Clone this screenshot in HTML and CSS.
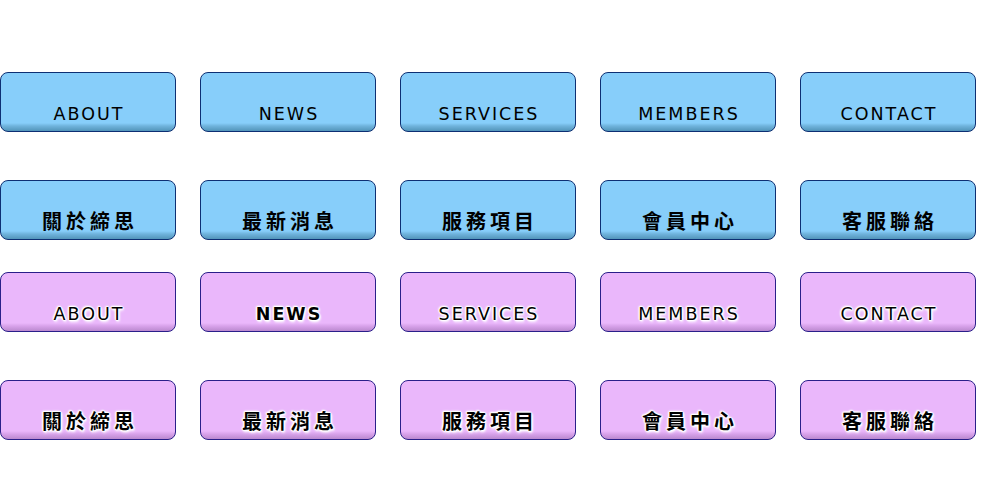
FILE: index.html
```html
<!DOCTYPE html>
<html lang="zh-Hant">
<head>
<meta charset="utf-8">
<title>Buttons</title>
<link rel="stylesheet" href="styles.css">
</head>
<body>
<div class="page">
  <div class="group blue">
    <div class="row en">
      <a class="btn">ABOUT</a>
      <a class="btn">NEWS</a>
      <a class="btn">SERVICES</a>
      <a class="btn">MEMBERS</a>
      <a class="btn">CONTACT</a>
    </div>
    <div class="row zh">
      <a class="btn">關於締思</a>
      <a class="btn">最新消息</a>
      <a class="btn">服務項目</a>
      <a class="btn">會員中心</a>
      <a class="btn">客服聯絡</a>
    </div>
  </div>
  <div class="group purple">
    <div class="row en">
      <a class="btn">ABOUT</a>
      <a class="btn bold">NEWS</a>
      <a class="btn">SERVICES</a>
      <a class="btn">MEMBERS</a>
      <a class="btn">CONTACT</a>
    </div>
    <div class="row zh">
      <a class="btn">關於締思</a>
      <a class="btn">最新消息</a>
      <a class="btn">服務項目</a>
      <a class="btn">會員中心</a>
      <a class="btn">客服聯絡</a>
    </div>
  </div>
</div>
</body>
</html>
```
FILE: styles.css
```css
html, body {
  margin: 0;
  padding: 0;
  background: #ffffff;
}
.page {
  padding-top: 72px;
  display: flex;
  flex-direction: column;
  gap: 32px;
}
.group {
  display: flex;
  flex-direction: column;
  gap: 48px;
}
.row {
  display: flex;
  gap: 24px;
}
.btn {
  box-sizing: border-box;
  width: 176px;
  height: 60px;
  border-radius: 8px;
  display: block;
  text-align: center;
  color: #000;
  text-decoration: none;
}
.blue .btn {
  border: 1px solid #0d2f73;
  background: linear-gradient(to bottom, #87cefa 0, #87cefa 50px, #6fb3dc 53px, #4d8fb3 59px);
}
.purple .btn {
  border: 1px solid #2a1f8a;
  background: linear-gradient(to bottom, #eab7fb 0, #eab7fb 50px, #d8a2ea 53px, #b584c9 59px);
}
.en .btn {
  font-family: "DejaVu Sans", Verdana, sans-serif;
  font-size: 17.5px;
  letter-spacing: 2px;
  line-height: 20px;
  padding-top: 31px;
  padding-left: 2px;
}
.zh .btn {
  font-family: "Noto Sans CJK TC", "Noto Sans CJK SC", sans-serif;
  font-size: 20px;
  font-weight: 700;
  letter-spacing: 4px;
  line-height: 24px;
  padding-top: 28px;
  padding-left: 4px;
}
.purple .btn {
  text-shadow: 1px 0 1px #fff, -1px 0 1px #fff, 0 1px 1px #fff, 0 -1px 1px #fff,
    1px 1px 2px #fff, -1px -1px 2px #fff, 1px 2px 3px #fff, 0 0 3px #fff;
}
.bold {
  font-weight: 700;
  letter-spacing: 2.5px;
}
```
